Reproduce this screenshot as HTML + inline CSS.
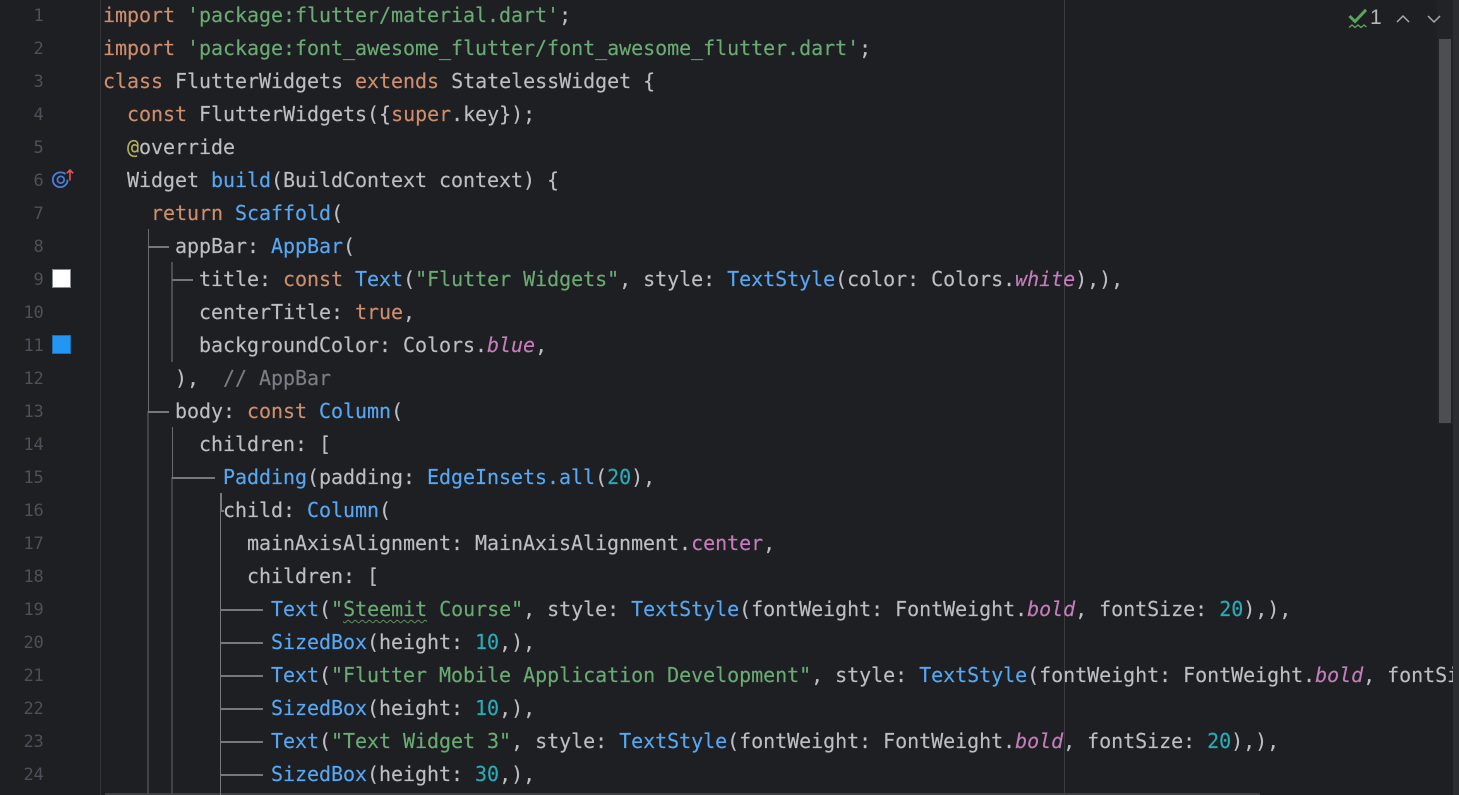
<!DOCTYPE html>
<html><head><meta charset="utf-8">
<style>
html,body{margin:0;padding:0;background:#1e1f22;}
#r{position:relative;width:1459px;height:795px;overflow:hidden;background:#1e1f22;font-family:"DejaVu Sans Mono","Liberation Mono",monospace;}
.l{position:absolute;left:103px;height:33px;line-height:33px;font-size:20px;letter-spacing:-.04px;color:#bcbec4;white-space:pre;margin-top:-1px;-webkit-text-stroke:.15px currentColor;}
.n{position:absolute;left:0;width:43.5px;text-align:right;height:33px;line-height:33px;font-size:17px;letter-spacing:-.23px;color:#4b5059;}
.k{color:#cf8e6d}.s{color:#6aab73}.b{color:#56a8f5}.t{color:#2aacb8}.p{color:#c77dbb}.i{font-style:italic}.c{color:#7a7e85}.a{color:#b3ae60}
.g{position:absolute;background:#77787a}
.v{position:absolute;background:#505154}
</style></head><body><div id="r">
<div class="v" style="left:99.5px;top:0;width:1.5px;height:795px;background:#313438"></div>
<div class="v" style="left:1064px;top:0;width:1px;height:795px;background:#393b40"></div>
<div class="v" style="left:1453px;top:0;width:6px;height:795px;background:#2b2d30"></div>
<div class="v" style="left:1437px;top:0;width:16px;height:424px;background:#222326"></div>
<div class="v" style="left:1439px;top:39px;width:12px;height:384px;background:#4d4e51"></div>
<div class="v" style="left:105px;top:793px;width:1155px;height:2px;background:#3e3f42"></div>

<div class="v" style="left:148px;top:229px;width:1px;height:182px;background:#6a6b6e"></div>
<div class="v" style="left:147px;top:411px;width:2px;height:384px;background:#434447"></div>
<div class="v" style="left:171px;top:262px;width:2px;height:100px;background:#4c4d50"></div>
<div class="v" style="left:172px;top:427px;width:1px;height:50px;background:#6a6b6e"></div>
<div class="v" style="left:171px;top:477px;width:2px;height:318px;background:#434447"></div>
<div class="v" style="left:220px;top:493px;width:2px;height:18px;background:#77787a"></div>
<div class="v" style="left:219.5px;top:510px;width:1.5px;height:285px;background:#77787a"></div>
<div class="g" style="left:148px;top:246px;width:21px;height:1.5px"></div>
<div class="g" style="left:172px;top:279px;width:21px;height:1.5px"></div>
<div class="g" style="left:148px;top:411px;width:21px;height:1.5px"></div>
<div class="g" style="left:172px;top:477px;width:43px;height:1.5px"></div>
<div class="g" style="left:220px;top:510px;width:4px;height:1.5px"></div>
<div class="g" style="left:220px;top:609px;width:43px;height:1.5px"></div>
<div class="g" style="left:220px;top:642px;width:43px;height:1.5px"></div>
<div class="g" style="left:220px;top:675px;width:43px;height:1.5px"></div>
<div class="g" style="left:220px;top:708px;width:43px;height:1.5px"></div>
<div class="g" style="left:220px;top:741px;width:43px;height:1.5px"></div>
<div class="g" style="left:220px;top:774px;width:43px;height:1.5px"></div>

<div class="n" style="top:0">1</div>
<div class="n" style="top:33px">2</div>
<div class="n" style="top:66px">3</div>
<div class="n" style="top:99px">4</div>
<div class="n" style="top:132px">5</div>
<div class="n" style="top:165px">6</div>
<div class="n" style="top:198px">7</div>
<div class="n" style="top:231px">8</div>
<div class="n" style="top:264px">9</div>
<div class="n" style="top:297px">10</div>
<div class="n" style="top:330px">11</div>
<div class="n" style="top:363px">12</div>
<div class="n" style="top:396px">13</div>
<div class="n" style="top:429px">14</div>
<div class="n" style="top:462px">15</div>
<div class="n" style="top:495px">16</div>
<div class="n" style="top:528px">17</div>
<div class="n" style="top:561px">18</div>
<div class="n" style="top:594px">19</div>
<div class="n" style="top:627px">20</div>
<div class="n" style="top:660px">21</div>
<div class="n" style="top:693px">22</div>
<div class="n" style="top:726px">23</div>
<div class="n" style="top:759px">24</div>

<svg style="position:absolute;left:45px;top:165px" width="40" height="30" viewBox="0 0 40 30" fill="none">
<path d="M22.6 14.6 A7.4 7.4 0 1 1 16 7.4 A7.4 7.4 0 0 1 20.5 9" stroke="#4a7fe0" stroke-width="1.8"/>
<circle cx="15.8" cy="14.8" r="3.4" stroke="#4a7fe0" stroke-width="1.7"/>
<path d="M25 15.5V5M21.8 8.3L25 5L28.2 8.3" stroke="#e5545c" stroke-width="1.6"/>
</svg>
<div style="position:absolute;left:52px;top:269px;width:19px;height:19px;box-sizing:border-box;background:#fff;border:1px solid #8a8b8d"></div>
<div style="position:absolute;left:52px;top:335px;width:19px;height:19px;box-sizing:border-box;background:#2196f3;border:1px solid #1b6fb3"></div>

<div class="l" style="top:0"><span class="k">import</span> <span class="s">'package:flutter/material.dart'</span>;</div>
<div class="l" style="top:33px"><span class="k">import</span> <span class="s">'package:font_awesome_flutter/font_awesome_flutter.dart'</span>;</div>
<div class="l" style="top:66px"><span class="k">class</span> FlutterWidgets <span class="k">extends</span> StatelessWidget {</div>
<div class="l" style="top:99px">  <span class="k">const</span> FlutterWidgets({<span class="k">super</span>.key});</div>
<div class="l" style="top:132px">  <span class="a">@</span>override</div>
<div class="l" style="top:165px">  Widget <span class="b">build</span>(BuildContext context) {</div>
<div class="l" style="top:198px">    <span class="k">return</span> <span class="b">Scaffold</span>(</div>
<div class="l" style="top:231px">      appBar: <span class="b">AppBar</span>(</div>
<div class="l" style="top:264px">        title: <span class="k">const</span> <span class="b">Text</span>(<span class="s">"Flutter Widgets"</span>, style: <span class="b">TextStyle</span>(color: Colors.<span class="p i">white</span>),),</div>
<div class="l" style="top:297px">        centerTitle: <span class="k">true</span>,</div>
<div class="l" style="top:330px">        backgroundColor: Colors.<span class="p i">blue</span>,</div>
<div class="l" style="top:363px">      ),  <span class="c">// AppBar</span></div>
<div class="l" style="top:396px">      body: <span class="k">const</span> <span class="b">Column</span>(</div>
<div class="l" style="top:429px">        children: [</div>
<div class="l" style="top:462px">          <span class="b">Padding</span>(padding: <span class="b">EdgeInsets.all</span>(<span class="t">20</span>),</div>
<div class="l" style="top:495px">          child: <span class="b">Column</span>(</div>
<div class="l" style="top:528px">            mainAxisAlignment: MainAxisAlignment.<span class="p">center</span>,</div>
<div class="l" style="top:561px">            children: [</div>
<div class="l" style="top:594px">              <span class="b">Text</span>(<span class="s">"<span style="text-decoration:underline wavy #5f8f5f 1px;text-underline-offset:3px">Steemit</span> Course"</span>, style: <span class="b">TextStyle</span>(fontWeight: FontWeight.<span class="p i">bold</span>, fontSize: <span class="t">20</span>),),</div>
<div class="l" style="top:627px">              <span class="b">SizedBox</span>(height: <span class="t">10</span>,),</div>
<div style="position:absolute;left:0;top:660px;width:1453px;height:33px;overflow:hidden"><div class="l" style="top:0">              <span class="b">Text</span>(<span class="s">"Flutter Mobile Application Development"</span>, style: <span class="b">TextStyle</span>(fontWeight: FontWeight.<span class="p i">bold</span>, fontSize: 20),),</div></div>
<div class="l" style="top:693px">              <span class="b">SizedBox</span>(height: <span class="t">10</span>,),</div>
<div class="l" style="top:726px">              <span class="b">Text</span>(<span class="s">"Text Widget 3"</span>, style: <span class="b">TextStyle</span>(fontWeight: FontWeight.<span class="p i">bold</span>, fontSize: <span class="t">20</span>),),</div>
<div class="l" style="top:759px">              <span class="b">SizedBox</span>(height: <span class="t">30</span>,),</div>

<svg style="position:absolute;left:1345px;top:5px" width="100" height="26" viewBox="0 0 100 26" fill="none">
<path d="M4.5 11L10 16.5L21 4.8" stroke="#57a65c" stroke-width="3"/>
<path d="M4 22.5L7 20L10 22.5L13 20L16 22.5L19 20L21.5 22" stroke="#57a65c" stroke-width="1.4"/>
<path d="M52 17L58 11L64 17M83 11L89 17L95 11" stroke="#a8aaae" stroke-width="1.5"/>
</svg>
<div style="position:absolute;left:1370px;top:6px;height:24px;line-height:24px;font-size:21px;font-family:'Liberation Sans',sans-serif;color:#b4b6ba">1</div>
</div></body></html>
